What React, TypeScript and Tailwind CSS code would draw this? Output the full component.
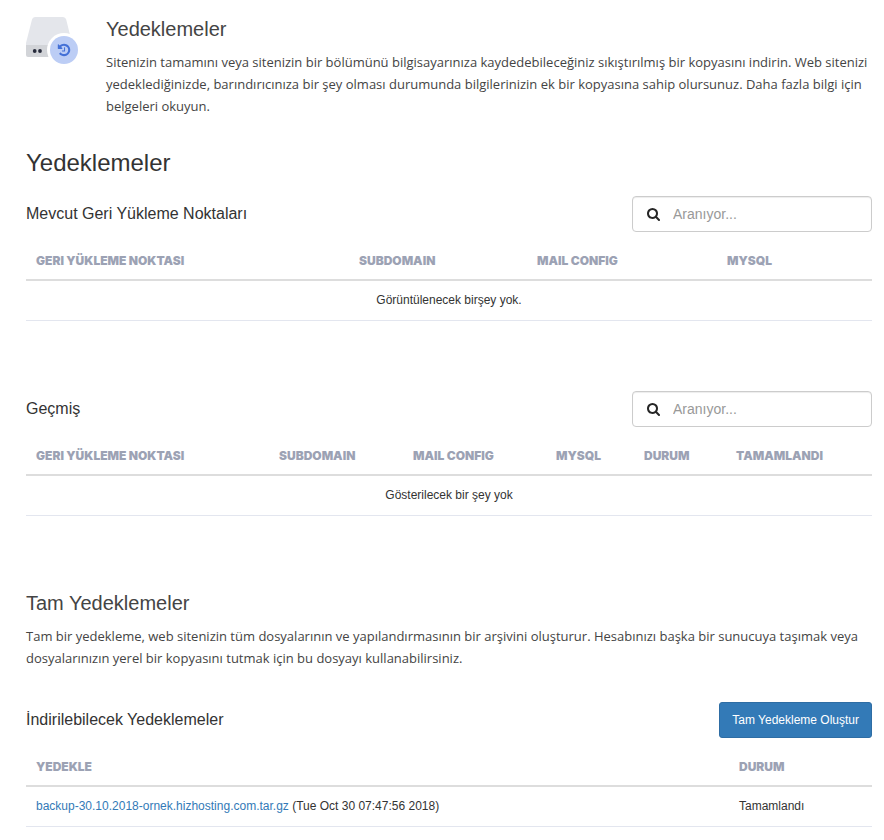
import { useState } from "react";
import type { ReactNode } from "react";

interface Column {
    title: string;
    width: string;
}

interface Backup {
    file: string;
    date: string;
    status: string;
}

const restoreColumns: Column[] = [
    { title: "GERI YÜKLEME NOKTASI", width: "" },
    { title: "SUBDOMAIN", width: "w-[178px]" },
    { title: "MAIL CONFIG", width: "w-[190px]" },
    { title: "MYSQL", width: "w-[155px]" },
];

const historyColumns: Column[] = [
    { title: "GERI YÜKLEME NOKTASI", width: "" },
    { title: "SUBDOMAIN", width: "w-[134px]" },
    { title: "MAIL CONFIG", width: "w-[143px]" },
    { title: "MYSQL", width: "w-[88px]" },
    { title: "DURUM", width: "w-[92px]" },
    { title: "TAMAMLANDI", width: "w-[146px]" },
];

const backupColumns: Column[] = [
    { title: "YEDEKLE", width: "" },
    { title: "DURUM", width: "w-[143px]" },
];

const backups: Backup[] = [
    {
        file: "backup-30.10.2018-ornek.hizhosting.com.tar.gz",
        date: "Tue Oct 30 07:47:56 2018",
        status: "Tamamlandı",
    },
];

function BackupIcon() {
    return (
        <svg viewBox="0 0 52 48" className="h-12 w-[52px] shrink-0" aria-hidden="true">
            <path d="M9 0h28q2.500 0 3.200 2.500L44 18V28H0v-2L6 2.500Q6.600 0 9 0z" fill="#e4e6eb" />
            <path d="M0 28h44v12H2q-2 0-2-2z" fill="#d2d4d8" />
            <circle cx="8.700" cy="34" r="1.900" fill="#282c3c" />
            <circle cx="14" cy="34" r="1.900" fill="#282c3c" />
            <circle cx="38" cy="33" r="17" fill="#fff" />
            <circle cx="38" cy="33" r="14" fill="#bccdf5" />
            <path
                transform="translate(31.800 25.700) scale(0.0081)"
                fill="#4470d6"
                d="M1536 896q0 156-61 298t-164 245-245 164-298 61q-172 0-327-72.500t-264-204.500q-7-10-6.500-22.500t8.500-20.500l137-138q10-9 25-9 16 2 23 12 73 95 179 147t225 52q104 0 198.500-40.500t163.500-109.500 109.500-163.500 40.500-198.500-40.500-198.500-109.500-163.500-163.500-109.500-198.500-40.500q-98 0-188 35.500t-160 101.500l137 138q31 30 14 69-17 40-59 40h-448q-26 0-45-19t-19-45v-448q0-42 40-59 39-17 69 14l130 129q107-101 244.500-156.500t284.500-55.500q156 0 298 61t245 164 164 245 61 298zm-640-288v448q0 14-9 23t-23 9h-320q-14 0-23-9t-9-23v-64q0-14 9-23t23-9h224v-352q0-14 9-23t23-9h64q14 0 23 9t9 23z"
            />
        </svg>
    );
}

function SearchBox({ id }: { id: string }) {
    const [query, setQuery] = useState("");

    return (
        <label
            htmlFor={id}
            className="flex h-9 w-60 items-center rounded border border-[#ccc] px-[14px] shadow-[inset_0_1px_1px_rgba(0,0,0,0.075)]"
        >
            <svg viewBox="0 0 1664 1792" className="h-[14px] w-[13px] shrink-0" aria-hidden="true">
                <path
                    fill="#262626"
                    d="M1152 832q0-185-131.500-316.500t-316.500-131.500-316.500 131.500-131.500 316.500 131.500 316.500 316.500 131.500 316.500-131.500 131.500-316.500zm512 832q0 52-38 90t-90 38q-54 0-90-38l-343-342q-179 124-399 124-143 0-273.500-55.500t-225-150-150-225-55.500-273.500 55.500-273.500 150-225 225-150 273.500-55.500 273.500 55.500 225 150 150 225 55.500 273.500q0 220-124 399l343 343q37 37 37 90z"
                />
            </svg>
            <input
                id={id}
                type="text"
                aria-label="Ara"
                placeholder="Aranıyor..."
                value={query}
                onChange={(e) => setQuery(e.target.value)}
                className="ml-[13px] w-full min-w-0 text-sm text-[#555] outline-none placeholder:text-[#999]"
            />
        </label>
    );
}

function DataTable({ columns, children }: { columns: Column[]; children: ReactNode }) {
    return (
        <table className="mt-2 w-full table-fixed border-separate border-spacing-0 text-xs text-[#333]">
            <thead>
                <tr>
                    {columns.map((c) => (
                        <th
                            key={c.title}
                            className={`${c.width} h-[41px] border-b-2 border-[#ddd] px-[10px] pt-[2px] text-left font-[Inter,sans-serif] font-black text-[#9ca2b4]`}
                        >
                            {c.title}
                        </th>
                    ))}
                </tr>
            </thead>
            <tbody>{children}</tbody>
        </table>
    );
}

function EmptyRow({ span, text }: { span: number; text: string }) {
    return (
        <tr>
            <td colSpan={span} className="h-10 border-b border-[#e3e6ef] px-[10px] pb-[2px] text-center">
                {text}
            </td>
        </tr>
    );
}

function SectionBar({ title, children }: { title: string; children: ReactNode }) {
    return (
        <div className="flex items-center justify-between">
            <h3 className="text-base text-[#333]">{title}</h3>
            {children}
        </div>
    );
}

function App() {
    return (
        <main className="bg-white pt-[17px] pr-3 pb-3 pl-[26px] font-['Liberation_Sans',Arial,sans-serif]">
            <header className="flex gap-7">
                <BackupIcon />
                <div>
                    <h1 className="text-xl leading-6 text-[#444]">Yedeklemeler</h1>
                    <p className="mt-[10px] font-['Open_Sans',sans-serif] text-[13px] leading-[22px] text-[#444]">
                        Sitenizin tamamını veya sitenizin bir bölümünü bilgisayarınıza kaydedebileceğiniz sıkıştırılmış bir
                        kopyasını indirin. Web sitenizi yedeklediğinizde, barındırıcınıza bir şey olması durumunda
                        bilgilerinizin ek bir kopyasına sahip olursunuz. Daha fazla bilgi için belgeleri okuyun.
                    </p>
                </div>
            </header>

            <h2 className="mt-[30px] mb-[17px] text-2xl leading-8 text-[#333]">Yedeklemeler</h2>

            <section>
                <SectionBar title="Mevcut Geri Yükleme Noktaları">
                    <SearchBox id="search-restore" />
                </SectionBar>
                <DataTable columns={restoreColumns}>
                    <EmptyRow span={4} text="Görüntülenecek birşey yok." />
                </DataTable>
            </section>

            <section className="mt-[70px]">
                <SectionBar title="Geçmiş">
                    <SearchBox id="search-history" />
                </SectionBar>
                <DataTable columns={historyColumns}>
                    <EmptyRow span={6} text="Gösterilecek bir şey yok" />
                </DataTable>
            </section>

            <section className="mt-[75px]">
                <h2 className="text-xl leading-6 text-[#444]">Tam Yedeklemeler</h2>
                <p className="mt-[10px] mb-[33px] font-['Open_Sans',sans-serif] text-[13px] leading-[22px] text-[#444]">
                    Tam bir yedekleme, web sitenizin tüm dosyalarının ve yapılandırmasının bir arşivini oluşturur. Hesabınızı
                    başka bir sunucuya taşımak veya dosyalarınızın yerel bir kopyasını tutmak için bu dosyayı
                    kullanabilirsiniz.
                </p>
                <SectionBar title="İndirilebilecek Yedeklemeler">
                    <button
                        type="button"
                        className="h-9 rounded-[3px] border border-[#2e6da4] bg-[#337ab7] px-3 text-xs text-white hover:bg-[#286090]"
                    >
                        Tam Yedekleme Oluştur
                    </button>
                </SectionBar>
                <DataTable columns={backupColumns}>
                    {backups.map((b) => (
                        <tr key={b.file}>
                            <td className="h-10 border-b border-[#e3e6ef] px-[10px] pb-[2px]">
                                <a href="#" className="text-[#337ab7] hover:underline">
                                    {b.file}
                                </a>{" "}
                                ({b.date})
                            </td>
                            <td className="h-10 border-b border-[#e3e6ef] px-[10px] pb-[2px]">{b.status}</td>
                        </tr>
                    ))}
                </DataTable>
            </section>
        </main>
    );
}

export default App;
